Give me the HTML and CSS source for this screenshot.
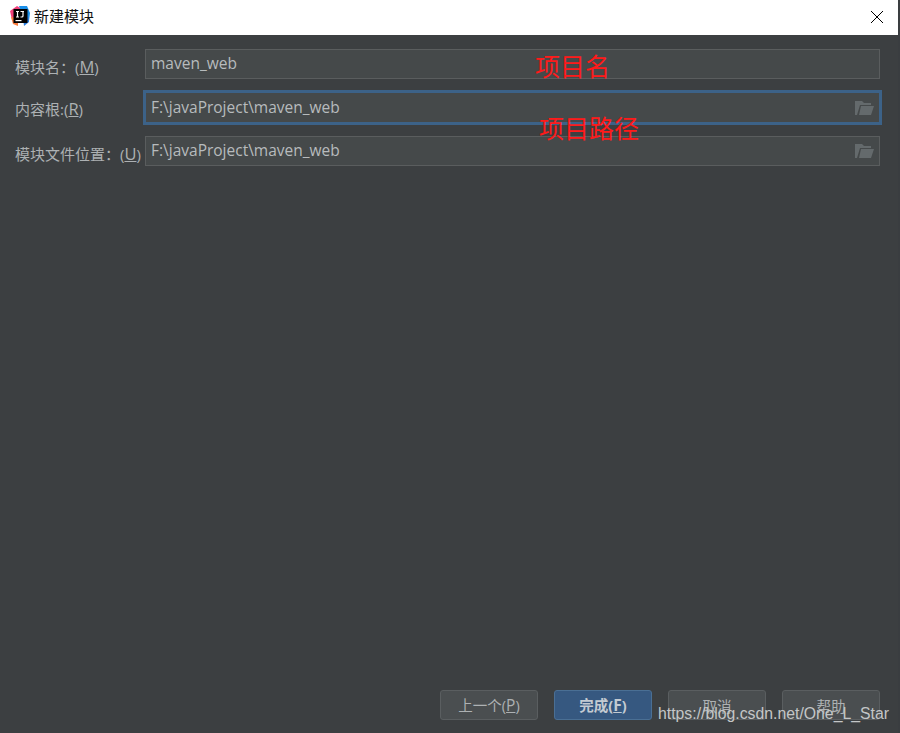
FILE: index.html
```html
<!DOCTYPE html>
<html lang="zh">
<head>
<meta charset="utf-8">
<title>新建模块</title>
<link rel="stylesheet" href="styles.css">
</head>
<body>
<div class="window">
  <header class="titlebar">
    <svg class="logo" width="20" height="20" viewBox="0 0 20 20">
      <path d="M0 5 L7 0 L12 3 L10 10 L2 14 Z" fill="#f0407a"/>
      <path d="M9 0 H17 L20 7 L19 15 L12 8 Z" fill="#1a8fe8"/>
      <path d="M1 11 L8 12 L8 20 L3 18 Z" fill="#f97a3c"/>
      <path d="M13 12 L19 11 L19 16 L14 20 Z" fill="#2a7fe0"/>
      <rect x="3.500" y="3" width="14" height="14" fill="#000"/>
      <rect x="5.500" y="14" width="6" height="1.200" fill="#fff"/>
      <path d="M6 5.500 H9 M7.500 5.500 V11 M6 11 H9 M10.500 5.500 H14 M13 5.500 V10 Q13 11 11.800 11 H10.500" stroke="#fff" stroke-width="1.200" fill="none"/>
    </svg>
    <span class="title">新建模块</span>
    <svg class="close" width="14" height="14" viewBox="0 0 14 14">
      <path d="M1 1 L13 13 M13 1 L1 13" stroke="#000" stroke-width="1" fill="none"/>
    </svg>
  </header>
  <main class="content">
    <form class="form">
      <label class="label label-name">模块名：(<u>M</u>)</label>
      <div class="field"><span>maven_web</span></div>
      <label class="label label-root">内容根:(<u>R</u>)</label>
      <div class="field focused"><span>F:\javaProject\maven_web</span>
        <svg class="folder" width="20" height="15" viewBox="0 0 20 15"><path d="M0 14 V0 H7 L9 2 H16 V4 H5 L2 14 Z M4 14 L6 5 H19 L16 14 Z" fill="#646a6c"/></svg>
      </div>
      <label class="label label-loc">模块文件位置：(<u>U</u>)</label>
      <div class="field"><span>F:\javaProject\maven_web</span>
        <svg class="folder" width="20" height="15" viewBox="0 0 20 15"><path d="M0 14 V0 H7 L9 2 H16 V4 H5 L2 14 Z M4 14 L6 5 H19 L16 14 Z" fill="#646a6c"/></svg>
      </div>
    </form>
    <footer class="actions">
      <button type="button" class="btn">上一个(<u>P</u>)</button>
      <button type="button" class="btn primary">完成(<u>F</u>)</button>
      <button type="button" class="btn">取消</button>
      <button type="button" class="btn">帮助</button>
    </footer>
  </main>
</div>
<div class="note note-name">项目名</div>
<div class="note note-path">项目路径</div>
<div class="watermark">https://blog.csdn.net/One_L_Star</div>
</body>
</html>
```
FILE: styles.css
```css
* { box-sizing: border-box; }
html, body { margin: 0; height: 100%; }
body {
  position: relative;
  height: 733px;
  overflow: hidden;
  background: #3a3d40;
  font-family: "Open Sans", "Noto Sans CJK SC", sans-serif;
}
.window {
  width: 898px;
  height: 733px;
  display: flex;
  flex-direction: column;
  background: #3c3f41;
}
.titlebar {
  flex: none;
  height: 35px;
  background: #fff;
  display: flex;
  align-items: center;
  padding: 0 14px 3px 10px;
}
.logo { flex: none; margin-right: 4px; }
.title {
  flex: 1;
  font-size: 15px;
  line-height: 20px;
  margin-top: -1px;
  color: #111;
  font-family: "Noto Sans CJK SC", sans-serif;
}
.close { flex: none; margin-top: 2px; }
.content {
  flex: 1;
  display: flex;
  flex-direction: column;
  justify-content: space-between;
  padding: 14px 18px 13px 15px;
}
.form {
  display: grid;
  grid-template-columns: 130px 735px;
  grid-auto-rows: 30px;
  row-gap: 13.500px;
  align-items: center;
}
.label {
  color: #adb1b3;
  font-size: 15px;
  line-height: 20px;
  white-space: nowrap;
  font-family: "Open Sans", "Noto Sans CJK SC", sans-serif;
}
.label u { font-size: 16.500px; }
.label-name { padding-top: 5px; }
.label-root { padding-top: 3px; }
.label-loc { padding-top: 5px; }
.field {
  position: relative;
  height: 30px;
  display: flex;
  align-items: center;
  justify-content: space-between;
  padding: 0 4px 3px 5px;
  background: #45494a;
  border: 1px solid #5a5d5e;
  color: #b7bbbd;
  font-size: 15.500px;
}
.focused {
  outline: 3px solid #3c6288;
  outline-offset: -1px;
  height: 31px;
  padding-top: 0;
  padding-bottom: 2px;
  border-color: #3c6288;
}
.folder { flex: none; margin-top: 4px; }
.actions {
  display: flex;
  justify-content: flex-end;
  gap: 16px;
}
.btn {
  width: 98px;
  height: 30px;
  padding: 0;
  border: 1px solid #5a5e60;
  border-radius: 3px;
  background: #4a4e50;
  color: #adb1b3;
  font-family: "Open Sans", "Noto Sans CJK SC", sans-serif;
  font-size: 14.500px;
}
.btn u { font-size: 15.500px; }
.primary {
  background: #365880;
  border-color: #4a6f94;
  color: #c4cbd2;
  font-weight: 700;
}
.note {
  position: absolute;
  color: #ff1a1a;
  font-size: 25px;
  line-height: 30px;
  font-family: "Noto Sans CJK SC", sans-serif;
  font-weight: 400;
}
.note-name { left: 535px; top: 50px; }
.note-path { left: 539px; top: 112px; }
.watermark {
  position: absolute;
  left: 658px;
  top: 703px;
  font-family: "Liberation Sans", sans-serif;
  font-size: 15.800px;
  line-height: 22px;
  color: #c4c6c7;
  white-space: nowrap;
}
```
